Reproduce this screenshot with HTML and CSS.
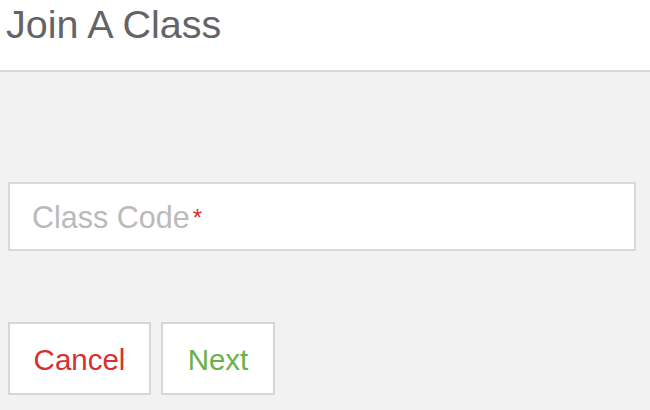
FILE: index.html
```html
<!DOCTYPE html>
<html>
<head>
<meta charset="utf-8">
<link rel="stylesheet" href="styles.css">
</head>
<body>
<header class="header">
  <h1 class="title">Join A Class</h1>
</header>
<main class="content">
  <label class="field">
    <span class="placeholder">Class Code<span class="req">*</span></span>
  </label>
  <div class="actions">
    <button class="btn btn-cancel">Cancel</button>
    <button class="btn btn-next">Next</button>
  </div>
</main>
</body>
</html>
```

FILE: styles.css
```css
html, body {
  margin: 0;
  padding: 0;
  height: 100%;
}
body {
  background: #f2f2f2;
  font-family: "Liberation Sans", Arial, Helvetica, sans-serif;
  overflow: hidden;
}
.header {
  background: #ffffff;
  border-bottom: 2px solid #dad7d4;
  padding: 2px 0 0 6px;
  box-sizing: border-box;
  height: 72px;
}
.title {
  margin: 0;
  font-weight: normal;
  font-size: 39.5px;
  line-height: 44px;
  color: #646464;
}
.content {
  padding: 110px 14px 0 8px;
}
.field {
  display: flex;
  align-items: center;
  height: 69px;
  box-sizing: border-box;
  background: #ffffff;
  border: 2px solid #d9d9d9;
  padding-left: 22px;
}
.placeholder {
  font-size: 30.5px;
  color: #bababa;
  position: relative;
  top: 1px;
}
.req {
  color: #d9302f;
  font-size: 24px;
  vertical-align: 2px;
  margin-left: 3px;
}
.actions {
  display: flex;
  gap: 10px;
  margin-top: 71px;
}
.btn {
  height: 73px;
  box-sizing: border-box;
  background: #ffffff;
  border: 2px solid #d6d6d6;
  padding: 3px 20px 0;
  font-family: "Liberation Sans", Arial, Helvetica, sans-serif;
  font-size: 29.5px;
  border-radius: 0;
}
.btn-cancel {
  color: #d9302f;
  width: 143px;
}
.btn-next {
  color: #6ab04c;
  width: 114px;
}
```
